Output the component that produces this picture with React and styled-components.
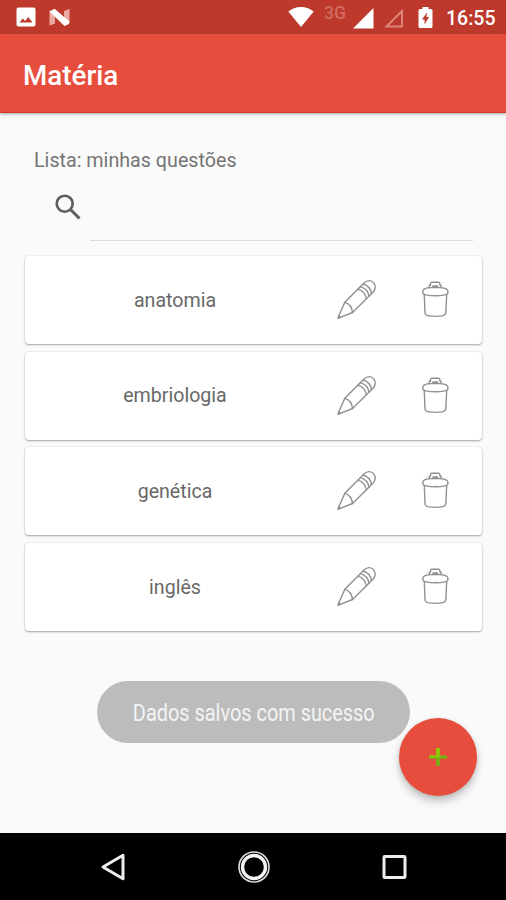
import { useState } from "react"
import styled, { createGlobalStyle } from "styled-components"

export default function App() {

    const [subjects] = useState(["anatomia", "embriologia", "genética", "inglês"])

    return (
        <Screen>
            <GlobalStyle />

            <StatusBar>
                <StatusGroup>
                    <ImageIcon />
                    <NougatIcon />
                </StatusGroup>
                <StatusGroup>
                    <WifiIcon />
                    <Network>3G</Network>
                    <SignalIcon />
                    <EmptySignalIcon />
                    <BatteryIcon />
                    <Clock>16:55</Clock>
                </StatusGroup>
            </StatusBar>

            <AppBar>
                <h1>Matéria</h1>
            </AppBar>

            <Content>
                <ListTitle>Lista: minhas questões</ListTitle>

                <SearchContainer>
                    <SearchIcon />
                    <SearchInput aria-label="Buscar" />
                </SearchContainer>

                <CardList>
                    {subjects.map((el) =>
                    <Card key={el}>
                        <CardName>{el}</CardName>
                        <CardButton aria-label="Editar"><PencilIcon /></CardButton>
                        <CardButton aria-label="Excluir"><TrashIcon /></CardButton>
                    </Card>)}
                </CardList>

                <Toast>
                    <span>Dados salvos com sucesso</span>
                </Toast>
                <AddButton aria-label="Adicionar"><PlusIcon /></AddButton>
            </Content>

            <NavBar>
                <BackIcon />
                <HomeIcon />
                <RecentIcon />
            </NavBar>
        </Screen>
    )
}

function ImageIcon() {
    return (
        <svg width="20" height="20" viewBox="0 0 20 20">
            <path fill="#fff" fillRule="evenodd" d="M2.500 .5h15a2 2 0 0 1 2 2v15a2 2 0 0 1-2 2h-15a2 2 0 0 1-2-2v-15a2 2 0 0 1 2-2zM3.500 15.500h13l-4.200-5.500-3.200 4-2.200-2.600z" />
        </svg>
    )
}

function NougatIcon() {
    return (
        <svg width="22" height="20" viewBox="0 0 22 20">
            <path fill="#e9aaa3" d="M.5 3.500 6 6v10.500L.5 18.500zM15 4l5.500-2V15L15 16z" />
            <path fill="#fff" d="M.5 4.500 5.500 1.700 20.500 14.500 20 17 15.500 19z" />
        </svg>
    )
}

function WifiIcon() {
    return (
        <svg width="26" height="20" viewBox="0 0 26 20">
            <path fill="#fff" d="M13 20 .3 4.600C3.500 1.700 8 0 13 0s9.500 1.700 12.700 4.600z" />
        </svg>
    )
}

function SignalIcon() {
    return (
        <svg width="21" height="21" viewBox="0 0 21 21">
            <path fill="#fff" d="M0 20.500 20.500 0v20.500z" />
        </svg>
    )
}

function EmptySignalIcon() {
    return (
        <svg width="20" height="20" viewBox="0 0 20 20">
            <path fill="none" stroke="#db8478" strokeWidth="2" d="M2.500 18.500 18 3v15.500z" />
        </svg>
    )
}

function BatteryIcon() {
    return (
        <svg width="15" height="21" viewBox="0 0 15 21">
            <path fill="#fff" fillRule="evenodd" d="M4.500 0h6v2H13a1.500 1.500 0 0 1 1.500 1.500v16A1.500 1.500 0 0 1 13 21H2a1.500 1.500 0 0 1-1.500-1.500v-16A1.500 1.500 0 0 1 2 2h2.500zM9 5.500 4 12.500h2.600V17.500L11 10H8.500z" />
        </svg>
    )
}

function SearchIcon() {
    return (
        <svg width="26" height="26" viewBox="0 0 26 26">
            <circle cx="9.700" cy="9.700" r="8" fill="none" stroke="#5d5d5d" strokeWidth="2.600" />
            <path fill="none" stroke="#5d5d5d" strokeWidth="3" d="M15.500 15.500 24.500 24.500" />
        </svg>
    )
}

function PencilIcon() {
    return (
        <svg width="50" height="50" viewBox="0 0 50 50" fill="none" stroke="#909090" strokeWidth="1.400" strokeLinecap="round" strokeLinejoin="round">
            <path d="M7.800 43.300 14.800 27.300 34 8C37.500 4.600 41.500 5 43.800 8.200 46.200 11.500 45.700 14.500 42.500 17.700L22.500 37.500z" />
            <path d="M14.800 27.300C19 28.500 22 32 22.500 37.500" />
            <path d="M27.800 14.200C32.500 15.500 35.600 18.700 36.300 23.800M30.400 11.600C35.100 12.900 38.200 16.100 38.900 21.200M33 9C37.700 10.300 40.800 13.500 41.500 18.600" />
            <path d="M8.900 40.900 10.400 42.100" />
        </svg>
    )
}

function TrashIcon() {
    return (
        <svg width="50" height="50" viewBox="0 0 50 50" fill="none" stroke="#909090" strokeWidth="1.400" strokeLinecap="round" strokeLinejoin="round">
            <path d="M19.300 12.700V10.300H20.500V8.500Q20.500 7.300 21.700 7.300H28.700Q29.900 7.300 29.900 8.500V10.300H31.100V12.700" />
            <path d="M23 11.900V11H27.500V11.900z" />
            <path d="M19.300 12.600C15 13 12.700 14.500 12.700 17 12.700 18.500 14 19.500 16 19.900 22 21 29 21 35 19.900 37 19.500 38 18.500 38 17 38 14.500 35.500 13 31.100 12.600z" />
            <path d="M14.300 19.700 15 37.700C15.200 39.700 17 40.600 19 40.900 23 41.500 28 41.500 32 40.900 34 40.600 35.600 39.700 35.800 37.700L36.700 19.700" />
        </svg>
    )
}

function PlusIcon() {
    return (
        <svg width="20" height="20" viewBox="0 0 20 20">
            <path fill="#76b414" d="M8.200 1h3.600v7.500H19v3.200h-7.200V19H8.200v-7.300H1V8.500h7.200z" />
            <path fill="#8ccb08" d="M8.200 1h3.600v7.500L10 10.200H1V8.500h7.200z" />
        </svg>
    )
}

function BackIcon() {
    return (
        <svg width="32" height="34" viewBox="0 0 32 34">
            <path fill="none" stroke="#eee" strokeWidth="3" strokeLinejoin="round" d="M5 17 25 5.300v23.400z" />
        </svg>
    )
}

function HomeIcon() {
    return (
        <svg width="34" height="34" viewBox="0 0 34 34" fill="none">
            <circle cx="17" cy="17" r="15" stroke="#d8d8d8" strokeWidth="1.700" />
            <circle cx="17" cy="17" r="11.500" stroke="#f4f4f4" strokeWidth="3.400" />
        </svg>
    )
}

function RecentIcon() {
    return (
        <svg width="32" height="34" viewBox="0 0 32 34">
            <rect x="7" y="6.500" width="21" height="21" rx=".8" fill="none" stroke="#eee" strokeWidth="3" />
        </svg>
    )
}

const GlobalStyle = createGlobalStyle`
    * {
        box-sizing: border-box;
    }
    body {
        margin: 0;
        font-family: Roboto, sans-serif;
    }
    svg {
        display: block;
        flex-shrink: 0;
    }
    button {
        border: none;
        padding: 0;
        background: none;
    }
`
const Screen = styled.div`
    width: 100%;
    height: 900px;
    display: flex;
    flex-direction: column;
    background-color: #fafafa;
    overflow: hidden;
`
const StatusBar = styled.div`
    height: 34px;
    flex-shrink: 0;
    display: flex;
    justify-content: space-between;
    padding: 0 10px 0 16px;
    background-color: #bd392b;
`
const StatusGroup = styled.div`
    display: flex;
    align-items: flex-start;
    padding-top: 7px;
    svg:nth-child(2) {
        margin-left: 13px;
    }
    svg:nth-child(3) {
        margin: 1px 0 0 5px;
    }
    svg:nth-child(4) {
        margin: 1px 0 0 10px;
    }
    svg:nth-child(5) {
        margin-left: 14px;
    }
`
const Network = styled.span`
    width: 24px;
    margin: -4px 0 0 10px;
    font-size: 17.500px;
    line-height: 20px;
    font-weight: 500;
    color: #d36c60;
`
const Clock = styled.span`
    width: 50px;
    margin-left: 13px;
    font-size: 19.500px;
    line-height: 24px;
    font-weight: 500;
    color: #fff;
    white-space: nowrap;
`
const AppBar = styled.header`
    height: 79px;
    flex-shrink: 0;
    display: flex;
    align-items: center;
    padding: 4px 23px 0;
    background-color: #e74d3d;
    border-bottom: 1px solid #cd3b29;
    box-shadow: 0 1px 3px rgba(0, 0, 0, 0.35);
    h1 {
        margin: 0;
        font-size: 27.800px;
        font-weight: 500;
        color: #fff;
    }
`
const Content = styled.main`
    position: relative;
    flex: 1;
    display: flex;
    flex-direction: column;
    padding: 36px 24px 0 25px;
`
const ListTitle = styled.p`
    margin: 0 0 0 9px;
    font-size: 19.700px;
    line-height: 24px;
    color: #757575;
`
const SearchContainer = styled.div`
    height: 68px;
    display: flex;
    align-items: flex-start;
    padding: 21px 9px 0 30px;
`
const SearchInput = styled.input`
    flex: 1;
    min-width: 0;
    height: 47px;
    margin-left: 9px;
    border: none;
    border-bottom: 1px solid #dcdcdc;
    background: transparent;
    outline: none;
`
const CardList = styled.div`
    display: flex;
    flex-direction: column;
    gap: 7.700px;
    margin-top: 15px;
`
const Card = styled.div`
    height: 88px;
    display: flex;
    align-items: center;
    padding-right: 22px;
    border-radius: 4px;
    background-color: #fff;
    box-shadow: 0 1px 2px rgba(0, 0, 0, 0.32), 0 0 2px rgba(0, 0, 0, 0.12);
`
const CardName = styled.span`
    width: 300px;
    margin-right: 5px;
    font-size: 19.600px;
    text-align: center;
    color: #686868;
`
const CardButton = styled.button`
    width: 50px;
    height: 50px;
    & + & {
        margin-left: 30px;
    }
`
const Toast = styled.div`
    position: absolute;
    left: 97px;
    top: 568px;
    width: 313px;
    height: 62px;
    display: flex;
    align-items: center;
    justify-content: center;
    padding-top: 2px;
    border-radius: 31px;
    background-color: #bcbcbc;
    span {
        font-size: 23px;
        color: #f4f4f4;
        white-space: nowrap;
        transform: scaleX(0.865);
    }
`
const AddButton = styled.button`
    position: absolute;
    right: 29px;
    top: 605px;
    width: 78px;
    height: 78px;
    display: flex;
    align-items: center;
    justify-content: center;
    && {
        background-color: #e74d3d;
    }
    border-radius: 50%;
    box-shadow: 0 6px 9px rgba(0, 0, 0, 0.2), 0 1px 4px rgba(0, 0, 0, 0.12);
`
const NavBar = styled.nav`
    height: 67px;
    flex-shrink: 0;
    display: flex;
    align-items: center;
    justify-content: space-between;
    padding: 0 97px 0 98px;
    background-color: #000;
`
